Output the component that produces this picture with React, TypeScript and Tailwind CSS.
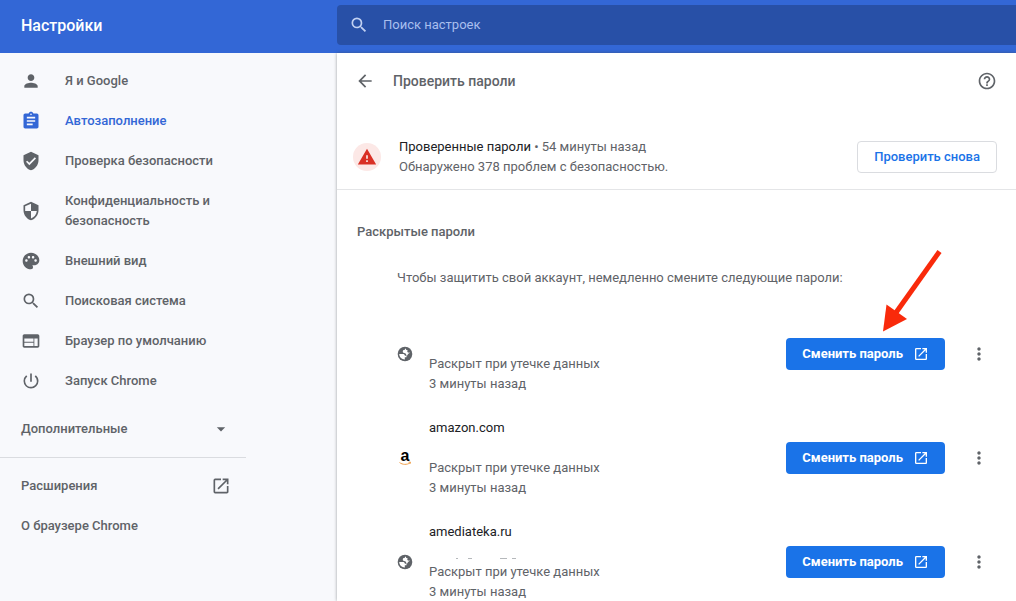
import { useState } from 'react';
import type { IconType } from 'react-icons';
import {
  MdArrowBack,
  MdArrowDropDown,
  MdAssignment,
  MdHelpOutline,
  MdMoreVert,
  MdOpenInNew,
  MdPalette,
  MdPerson,
  MdPowerSettingsNew,
  MdSearch,
  MdSecurity,
  MdVerifiedUser,
  MdWarning,
  MdWeb,
} from 'react-icons/md';

interface NavItem {
  label: string;
  icon: IconType;
  active?: boolean;
}

interface LeakedPassword {
  id: number;
  site: string;
  logo: 'globe' | 'amazon';
  hiddenUser?: boolean;
}

const navItems: NavItem[] = [
  { label: 'Я и Google', icon: MdPerson },
  { label: 'Автозаполнение', icon: MdAssignment, active: true },
  { label: 'Проверка безопасности', icon: MdVerifiedUser },
  { label: 'Конфиденциальность и безопасность', icon: MdSecurity },
  { label: 'Внешний вид', icon: MdPalette },
  { label: 'Поисковая система', icon: MdSearch },
  { label: 'Браузер по умолчанию', icon: MdWeb },
  { label: 'Запуск Chrome', icon: MdPowerSettingsNew },
];

const leaked: LeakedPassword[] = [
  { id: 1, site: '', logo: 'globe' },
  { id: 2, site: 'amazon.com', logo: 'amazon' },
  { id: 3, site: 'amediateka.ru', logo: 'globe', hiddenUser: true },
];

function GlobeIcon() {
  return (
    <svg viewBox="0 0 16 16" className="h-4 w-4" aria-hidden="true">
      <circle cx="8" cy="8" r="7.3" fill="#5f6368" />
      <path
        d="M2.200 8h3.400c1.500 0 2.200.7 2.300 1.700h1.600v1.500H7.800v2.200c-2.600.1-5.400-2-5.600-5.400zM13 6.500c-.4.700-1.200 1.200-2.200 1.300.2 1.100-.3 1.900-1.300 1.900-.1-1.600-.9-2.500-2.400-2.700-1-.2-1.400-.8-1.300-1.800.1-.9.700-1.300 1.900-1.200 0-.8.400-1.400 1.300-1.600-.2.900.1 1.400.9 1.600.9.200 1 1.200.2 1.700.8.900 1.800 1.100 2.900.8z"
        fill="#fff"
      />
    </svg>
  );
}

function AmazonIcon() {
  return (
    <span className="relative flex h-4 w-4 items-center justify-center" aria-hidden="true">
      <span className="pb-1 font-['Liberation_Sans',sans-serif] text-base leading-4 font-bold text-black">a</span>
      <svg viewBox="0 0 16 5" className="absolute bottom-0 left-0 h-[5px] w-4" fill="none" stroke="#f0a04b">
        <path d="M2.500 1.500c3 2.400 7.500 2.400 10.500.4M11.500 1.200l2-.1-.5 1.800" />
      </svg>
    </span>
  );
}

function Sidebar() {
  return (
    <aside className="w-[337px] shrink-0 bg-[#f8f9fc] pt-2 font-medium text-[#5f6368]">
      <nav>
        {navItems.map(({ label, icon: Icon, active }) => (
          <a
            key={label}
            href="#"
            className={`flex min-h-10 w-[246px] items-center gap-6 py-[10px] pl-[21px] ${active ? 'text-[#3367d6]' : ''}`}
          >
            <Icon className="h-5 w-5 shrink-0" />
            <span>{label}</span>
          </a>
        ))}
      </nav>

      <button type="button" className="my-2 flex h-10 w-[246px] items-center justify-between pr-[15px] pl-[21px]">
        Дополнительные
        <MdArrowDropDown className="h-5 w-5" />
      </button>

      <div className="w-[246px] border-t border-[#dadce0] pt-2">
        <a href="#" className="flex h-10 items-center justify-between pr-[15px] pl-[21px]">
          Расширения
          <MdOpenInNew className="h-5 w-5" />
        </a>
        <a href="#" className="flex h-10 items-center pl-[21px]">
          О браузере Chrome
        </a>
      </div>
    </aside>
  );
}

function PasswordRow({ item }: { item: LeakedPassword }) {
  return (
    <li className="flex h-[104px] items-center">
      <div className="flex w-8 shrink-0 items-center">
        {item.logo === 'amazon' ? <AmazonIcon /> : <GlobeIcon />}
      </div>
      <div className="grow">
        <p className="h-5 text-[#202124]">{item.site}</p>
        <div className="flex h-5 items-end pb-[2px]">
          {/* what is left of the erased user name */}
          {item.hiddenUser && (
            <svg viewBox="0 0 90 2" className="h-[2px] w-[90px]" fill="#b5b8bb" aria-hidden="true">
              <path d="M27 0h2v1h-2zM39 0h4v1h-4zM71 0h7v1h-7zM83 0h4v1h-4z" />
            </svg>
          )}
        </div>
        <p>Раскрыт при утечке данных</p>
        <p>3 минуты назад</p>
      </div>
      <button
        type="button"
        className="flex h-8 items-center gap-[10px] rounded bg-[#1a73e8] px-4 font-bold text-white"
      >
        Сменить пароль
        <MdOpenInNew className="h-4 w-4" />
      </button>
      <button type="button" aria-label="Другие действия" className="ml-4 flex h-9 w-9 items-center justify-center">
        <MdMoreVert className="h-5 w-5" />
      </button>
    </li>
  );
}

export default function App() {
  const [query, setQuery] = useState('');

  return (
    <div className="flex h-screen flex-col overflow-hidden bg-white font-[Roboto,sans-serif] text-[13px] leading-5 text-[#5f6368]">
      <header className="flex h-[53px] shrink-0 items-start bg-[#3367d6]">
        <h1 className="w-[337px] shrink-0 pt-4 pl-[21px] text-base leading-5 font-medium text-white">
          Настройки
        </h1>
        <label className="mt-[5px] flex h-10 grow items-center gap-[14px] rounded-l-sm bg-[#2850a7] pl-3 text-[#c2d1f2]">
          <MdSearch className="h-5 w-5" />
          <input
            type="search"
            aria-label="Поиск настроек"
            placeholder="Поиск настроек"
            value={query}
            onChange={(e) => setQuery(e.target.value)}
            className="grow bg-transparent outline-none placeholder:text-[#a9bfee]"
          />
        </label>
      </header>

      <div className="flex min-h-0 grow">
        <Sidebar />

        <main className="relative min-w-0 grow bg-white shadow-[0_0_3px_rgba(60,64,67,0.5)]">
          <div className="flex h-14 items-center pr-[19px] pl-[18px]">
            <button type="button" aria-label="Назад">
              <MdArrowBack className="h-5 w-5" />
            </button>
            <h2 className="grow pl-[18px] text-sm leading-5 font-medium">Проверить пароли</h2>
            <button type="button" aria-label="Справка">
              <MdHelpOutline className="h-5 w-5" />
            </button>
          </div>

          <section className="flex items-center border-b border-[#e4e5e7] pt-[26px] pr-[19px] pb-[10px] pl-4">
            <span className="flex h-7 w-7 items-center justify-center rounded-full bg-[#fce8e6] text-[#d93025]">
              <MdWarning className="h-5 w-5" />
            </span>
            <div className="grow py-[2px] pl-[18px]">
              <p>
                <span className="text-[#202124]">Проверенные пароли</span> • 54 минуты назад
              </p>
              <p>Обнаружено 378 проблем с безопасностью.</p>
            </div>
            <button
              type="button"
              className="h-8 rounded border border-[#dadce0] px-4 font-medium text-[#1a73e8]"
            >
              Проверить снова
            </button>
          </section>

          <section className="pt-8 pr-[19px] pl-5">
            <h3 className="font-medium">Раскрытые пароли</h3>
            <div className="pt-[26px] pl-10">
              <p>Чтобы защитить свой аккаунт, немедленно смените следующие пароли:</p>
              <ul className="pt-[14px]">
                {leaked.map((item) => (
                  <PasswordRow key={item.id} item={item} />
                ))}
              </ul>
            </div>
          </section>

          {/* Arrow pointing at the first button */}
          <svg
            viewBox="0 0 62 84"
            className="pointer-events-none absolute top-[196px] right-[74px] h-[84px] w-[62px]"
            aria-hidden="true"
          >
            <path d="M59.500 2.500L15 65" stroke="#f92a0b" strokeWidth="5" />
            <path d="M3 82.500L6.500 55.500L27 70Z" fill="#f92a0b" />
          </svg>
        </main>
      </div>
    </div>
  );
}
